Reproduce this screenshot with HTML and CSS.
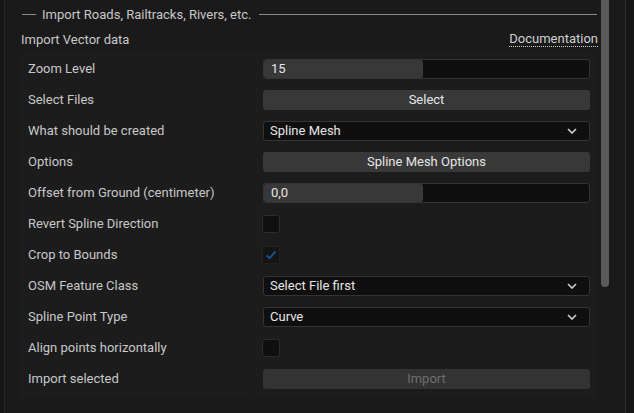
FILE: index.html
```html
<!DOCTYPE html>
<html>
<head>
<meta charset="utf-8">
<link rel="stylesheet" href="styles.css">
</head>
<body>
<div class="page">
  <div class="edge-left"></div>
  <div class="main">
    <div class="section-head">
      <span class="rule short"></span>
      <span class="section-title">Import Roads, Railtracks, Rivers, etc.</span>
      <span class="rule long"></span>
    </div>
    <div class="sub-head">
      <span class="sub-title">Import Vector data</span>
      <span class="doc-link">Documentation</span>
    </div>
    <div class="rows">
      <div class="row">
        <div class="label">Zoom Level</div>
        <div class="value"><div class="spin"><div class="spin-fill" style="width:49%"></div><span class="spin-text">15</span></div></div>
      </div>
      <div class="row">
        <div class="label">Select Files</div>
        <div class="value"><div class="button">Select</div></div>
      </div>
      <div class="row">
        <div class="label">What should be created</div>
        <div class="value"><div class="combo"><span>Spline Mesh</span><svg class="chev" width="10" height="6" viewBox="0 0 10 6"><path d="M1 1 L5 5 L9 1" fill="none" stroke="#d0d0d0" stroke-width="1.6"/></svg></div></div>
      </div>
      <div class="row">
        <div class="label">Options</div>
        <div class="value"><div class="button">Spline Mesh Options</div></div>
      </div>
      <div class="row">
        <div class="label">Offset from Ground (centimeter)</div>
        <div class="value"><div class="spin"><div class="spin-fill" style="width:49%"></div><span class="spin-text">0,0</span></div></div>
      </div>
      <div class="row">
        <div class="label">Revert Spline Direction</div>
        <div class="value"><div class="check"></div></div>
      </div>
      <div class="row">
        <div class="label">Crop to Bounds</div>
        <div class="value"><div class="check checked"><svg width="12" height="10" viewBox="0 0 12 10"><path d="M1.5 5.5 L4.5 8.2 L10.5 1.5" fill="none" stroke="#1a4f8e" stroke-width="2"/></svg></div></div>
      </div>
      <div class="row">
        <div class="label">OSM Feature Class</div>
        <div class="value"><div class="combo"><span>Select File first</span><svg class="chev" width="10" height="6" viewBox="0 0 10 6"><path d="M1 1 L5 5 L9 1" fill="none" stroke="#d0d0d0" stroke-width="1.6"/></svg></div></div>
      </div>
      <div class="row">
        <div class="label">Spline Point Type</div>
        <div class="value"><div class="combo"><span>Curve</span><svg class="chev" width="10" height="6" viewBox="0 0 10 6"><path d="M1 1 L5 5 L9 1" fill="none" stroke="#d0d0d0" stroke-width="1.6"/></svg></div></div>
      </div>
      <div class="row">
        <div class="label">Align points horizontally</div>
        <div class="value"><div class="check"></div></div>
      </div>
      <div class="row">
        <div class="label">Import selected</div>
        <div class="value"><div class="button disabled">Import</div></div>
      </div>
    </div>
  </div>
  <div class="scroll-col"><div class="thumb"></div></div>
  <div class="side-gap"></div>
  <div class="edge-right"></div>
</div>
</body>
</html>
```
FILE: styles.css
```css
* { box-sizing: border-box; }
html, body { margin: 0; padding: 0; }
body {
  background: #1a1a1a;
  font-family: Roboto, "Liberation Sans", sans-serif;
  font-size: 13px;
  color: #c8c8c8;
}
.page {
  display: flex;
  width: 634px;
  height: 413px;
  overflow: hidden;
}
.edge-left {
  width: 5px;
  background: #151515;
  border-right: 1px solid #262626;
}
.main {
  width: 595px;
  padding: 0 3px 0 17px;
  background: #1a1a1a;
}
.section-head {
  display: flex;
  align-items: center;
  height: 28px;
}
.rule {
  height: 1px;
  background: #8a8a8a;
}
.rule.short { width: 14px; }
.rule.long { flex: 1; }
.section-title {
  padding: 0 7px 0 6px;
  color: #c8c8c8;
  font-size: 13px;
}
.sub-head {
  display: flex;
  justify-content: space-between;
  align-items: center;
  height: 22px;
  margin-left: -1px;
  margin-right: -1px;
}
.doc-link {
  color: #d0d0d0;
  border-bottom: 1px dotted #d0d0d0;
  line-height: 15px;
}
.rows {
  margin: 3px 0 0 -2px;
  background: #1c1c1c;
  padding-bottom: 4px;
}
.row {
  display: flex;
  height: 31px;
}
.label {
  width: 234px;
  padding-left: 8px;
  display: flex;
  align-items: center;
  border-right: 1px solid #181818;
}
.value {
  flex: 1;
  display: flex;
  align-items: center;
  padding: 0 7px 0 9px;
}
.spin {
  position: relative;
  width: 100%;
  height: 20px;
  background: #0f0f0f;
  border: 1px solid #343434;
  border-radius: 3px;
  overflow: hidden;
}
.spin-fill {
  height: 100%;
  background: #383838;
  border-radius: 2px;
}
.spin-text {
  position: absolute;
  left: 7px;
  top: 1px;
  color: #e6e6e6;
  line-height: 16px;
}
.button {
  width: 100%;
  height: 20px;
  background: #383838;
  border-radius: 3px;
  color: #e6e6e6;
  display: flex;
  align-items: center;
  justify-content: center;
}
.button.disabled {
  background: #333333;
  color: #6e6e6e;
}
.combo {
  width: 100%;
  height: 20px;
  background: #0f0f0f;
  border: 1px solid #343434;
  border-radius: 3px;
  display: flex;
  align-items: center;
  justify-content: space-between;
  padding: 0 12px 0 6px;
  color: #e6e6e6;
}
.chev { display: block; }
.check {
  width: 18px;
  height: 18px;
  margin-left: -1px;
  background: #0f0f0f;
  border: 1px solid #2c2c2c;
  border-radius: 3px;
  display: flex;
  align-items: center;
  justify-content: center;
}
.check.checked {
  background: #141414;
  border-color: #222222;
}
.scroll-col {
  width: 10px;
  padding: 0 1px;
  background: #1a1a1a;
}
.thumb {
  width: 8px;
  height: 287px;
  background: #5a5a5a;
  border-radius: 0 0 4px 4px;
}
.side-gap {
  width: 16px;
  background: #1a1a1a;
  border-right: 1px solid #2c2c2c;
}
.edge-right {
  flex: 1;
  background: #161616;
}
```
